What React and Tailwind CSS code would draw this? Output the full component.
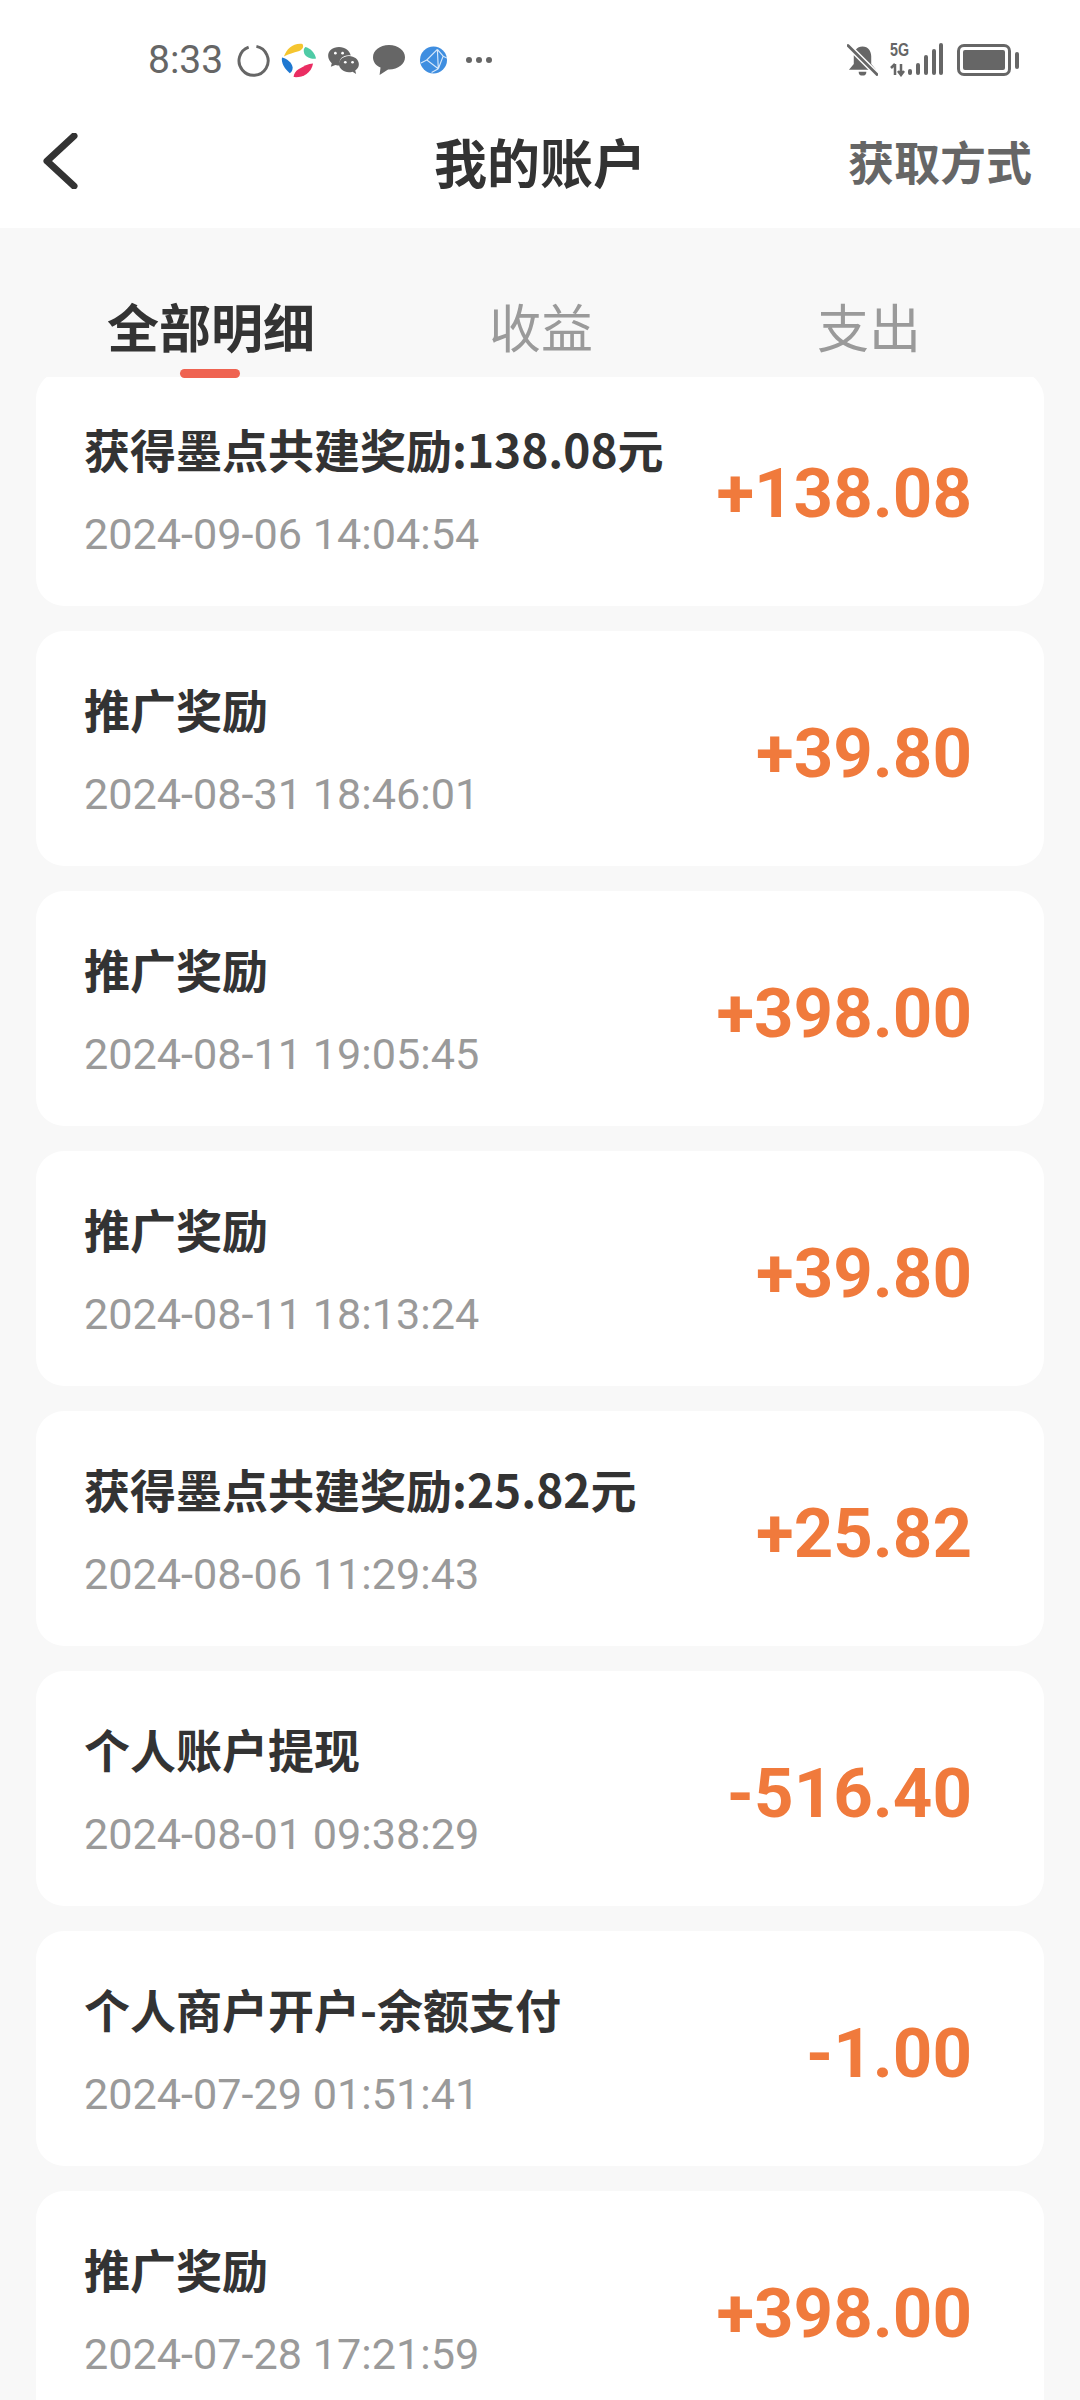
const CN = { fontFamily: '"Noto Sans CJK SC", "Noto Sans", sans-serif' };
const RB = { fontFamily: 'Roboto, sans-serif' };
const ROWS = [
  ['获得墨点共建奖励:138.08元', '2024-09-06 14:04:54', '+138.08'],
  ['推广奖励', '2024-08-31 18:46:01', '+39.80'],
  ['推广奖励', '2024-08-11 19:05:45', '+398.00'],
  ['推广奖励', '2024-08-11 18:13:24', '+39.80'],
  ['获得墨点共建奖励:25.82元', '2024-08-06 11:29:43', '+25.82'],
  ['个人账户提现', '2024-08-01 09:38:29', '-516.40'],
  ['个人商户开户-余额支付', '2024-07-29 01:51:41', '-1.00'],
  ['推广奖励', '2024-07-28 17:21:59', '+398.00'],
];
function Row({ title, date, amount }) {
  return (
    <div className="flex h-[235px] shrink-0 items-center justify-between rounded-[28px] bg-white pl-[48px] pr-[72px]">
      <div className="flex flex-col pt-[3px]">
        <div className="text-[46px] leading-[56px] font-bold text-[#333333] whitespace-nowrap">{title}</div>
        <div className="mt-[34px] text-[43.200px] leading-[50px] text-[#9a9a9a] whitespace-nowrap" style={RB}>{date}</div>
      </div>
      <div className="pt-[11px] text-[69px] leading-[80px] font-bold text-[#f07a3c] whitespace-nowrap" style={RB}>{amount}</div>
    </div>
  );
}
function StatusBar() {
  return (
    <div className="flex h-[120px] items-center justify-between pl-[148px] pr-[61px] text-[#666666]">
      <div className="flex items-center">
        <span className="w-[75px] text-[39px] leading-none" style={RB}>8:33</span>
        <svg className="ml-[14px]" width="33" height="33" viewBox="0 0 34 34"><path d="M20 2.500a15 15 0 1 1-8 .6" fill="none" stroke="#666" strokeWidth="3" /></svg>
        <svg className="ml-[11px]" width="35" height="35" viewBox="0 0 36 36">
          <path d="M3 14C6 6 12 0 22 1c2 3 0 6-4 7.500-5 1.500-10 2.500-15 5.500z" fill="#f5c52f" />
          <path d="M25 4c5 1 10 6 11 12-4 1-10-1-12-5-1-3-1-5 1-7z" fill="#4fcba6" />
          <path d="M1 15c5 1 10 5 11 10 0 3-1 5-3 6C4 27 0 21 1 15z" fill="#1f78d1" />
          <path d="M13 35c8 1 18-3 20-14-5 0-10 3-15 6-3 2-5 5-5 8z" fill="#ea2d62" />
        </svg>
        <svg className="ml-[11px]" width="33" height="28" viewBox="0 0 36 31">
          <path d="M13 1C6 1 1 5 1 11c0 3 2 6 4 8l-1 4 5-2c2 .5 3 .5 5 .5-2-7 4-12 12-11C25 5 20 1 13 1z" fill="#666" />
          <path d="M24 11c-6 0-11 4-11 9s5 9 11 9c1 0 3 0 4-.5l4 2.500-1-4c3-2 4-4 4-7 0-5-5-9-11-9z" fill="#666" />
          <circle cx="9" cy="8" r="1.500" fill="#fff" /><circle cx="17" cy="8" r="1.500" fill="#fff" />
          <circle cx="20" cy="18" r="1.500" fill="#fff" /><circle cx="28" cy="18" r="1.500" fill="#fff" />
        </svg>
        <svg className="ml-[12px]" width="34" height="32" viewBox="0 0 36 34"><path d="M18 1C8 1 1 7 1 14c0 5 3 9 8 11l-1 8 9-6h1c10 0 17-6 17-13S28 1 18 1z" fill="#666" /></svg>
        <svg className="ml-[14px]" width="27" height="28" viewBox="0 0 28 28">
          <circle cx="14" cy="14" r="14" fill="#3f8ee0" />
          <path d="M18 3 L7 14 L19 23 M7 14 L1 17 M18 3 L24 10 L19 23 M19 23 L12 27 M24 10 L28 12 M18 3 L19 23" stroke="#d7e8fa" strokeWidth="1.200" fill="none" />
        </svg>
        <span className="ml-[19px] flex gap-[4px]">
          <i className="block h-[6px] w-[6px] rounded-full bg-[#666666]" />
          <i className="block h-[6px] w-[6px] rounded-full bg-[#666666]" />
          <i className="block h-[6px] w-[6px] rounded-full bg-[#666666]" />
        </span>
      </div>
      <div className="flex items-center">
        <svg width="31" height="34" viewBox="0 0 32 34">
          <path d="M16 3c-6 0-9 5-9 10v8l-5 6h28l-5-6v-8c0-5-3-10-9-10z" fill="#666" />
          <path d="M12 29h8a4 4 0 0 1-8 0z" fill="#666" />
          <path d="M1 2 L31 32" stroke="#fff" strokeWidth="6" />
          <path d="M1 2 L31 32" stroke="#666" strokeWidth="3" strokeLinecap="round" />
        </svg>
        <div className="relative ml-[12px] h-[34px] w-[53px]">
          <span className="absolute left-0 top-[-2px] origin-left scale-x-75 text-[19px] font-bold leading-[18px]" style={{ fontFamily: '"Liberation Sans", sans-serif' }}>5G</span>
          <svg className="absolute inset-0" width="53" height="34" viewBox="0 0 53 34">
            <path d="M5 21 L5 32 M1 25 L5 21 M11 21 L11 32 M8 28 L11 32 L14 28" stroke="#666" strokeWidth="2.500" fill="none" />
            <rect x="18" y="26" width="4" height="6" rx="2" fill="#666" />
            <rect x="26" y="20" width="4" height="12" rx="2" fill="#666" />
            <rect x="34" y="12" width="4" height="20" rx="2" fill="#666" />
            <rect x="42" y="6" width="4" height="26" rx="2" fill="#666" />
            <rect x="49" y="0" width="4" height="32" rx="2" fill="#666" />
          </svg>
        </div>
        <div className="ml-[14px] flex h-[32px] w-[54px] items-center justify-center rounded-[7px] border-[3px] border-[#666666]">
          <div className="h-[20px] w-[42px] rounded-[2px] bg-[#666666]" />
        </div>
        <div className="ml-[4px] h-[17px] w-[4px] rounded-full bg-[#666666]" />
      </div>
    </div>
  );
}
export default function App() {
  return (
    <div className="flex h-[2400px] w-[1080px] flex-col overflow-hidden bg-[#f8f8f8]" style={CN}>
      <div className="bg-white">
        <StatusBar />
        <div className="relative flex h-[108px] items-center justify-between pb-[26px] pl-[42px] pr-[48px]">
          <svg width="36" height="56" viewBox="0 0 36 56"><path d="M32 3 L5 28 L32 53" fill="none" stroke="#333333" strokeWidth="7" strokeLinecap="round" strokeLinejoin="round" /></svg>
          <div className="absolute left-0 right-0 text-center text-[53px] font-bold leading-[60px] text-[#333333]">我的账户</div>
          <div className="-mt-[2px] text-[46px] font-bold leading-[60px] text-[#666666]">获取方式</div>
        </div>
      </div>
      <div className="flex h-[149px] shrink-0 pl-[107px] pt-[63px]">
        <div className="relative w-[220px] text-[52px] font-bold leading-[70px] text-[#333333]">
          全部明细
          <div className="absolute left-[73px] top-[78px] h-[9px] w-[60px] rounded-full bg-[#ef6351]" />
        </div>
        <div className="ml-[162px] w-[120px] text-[52px] leading-[70px] text-[#9a9a9a]">收益</div>
        <div className="ml-[208px] w-[120px] text-[52px] leading-[70px] text-[#9a9a9a]">支出</div>
      </div>
      <div className="min-h-0 flex-1 overflow-hidden px-[36px]">
        <div className="-mt-[6px] flex flex-col gap-[25px]">
          {ROWS.map((r, i) => <Row key={i} title={r[0]} date={r[1]} amount={r[2]} />)}
        </div>
      </div>
    </div>
  );
}
